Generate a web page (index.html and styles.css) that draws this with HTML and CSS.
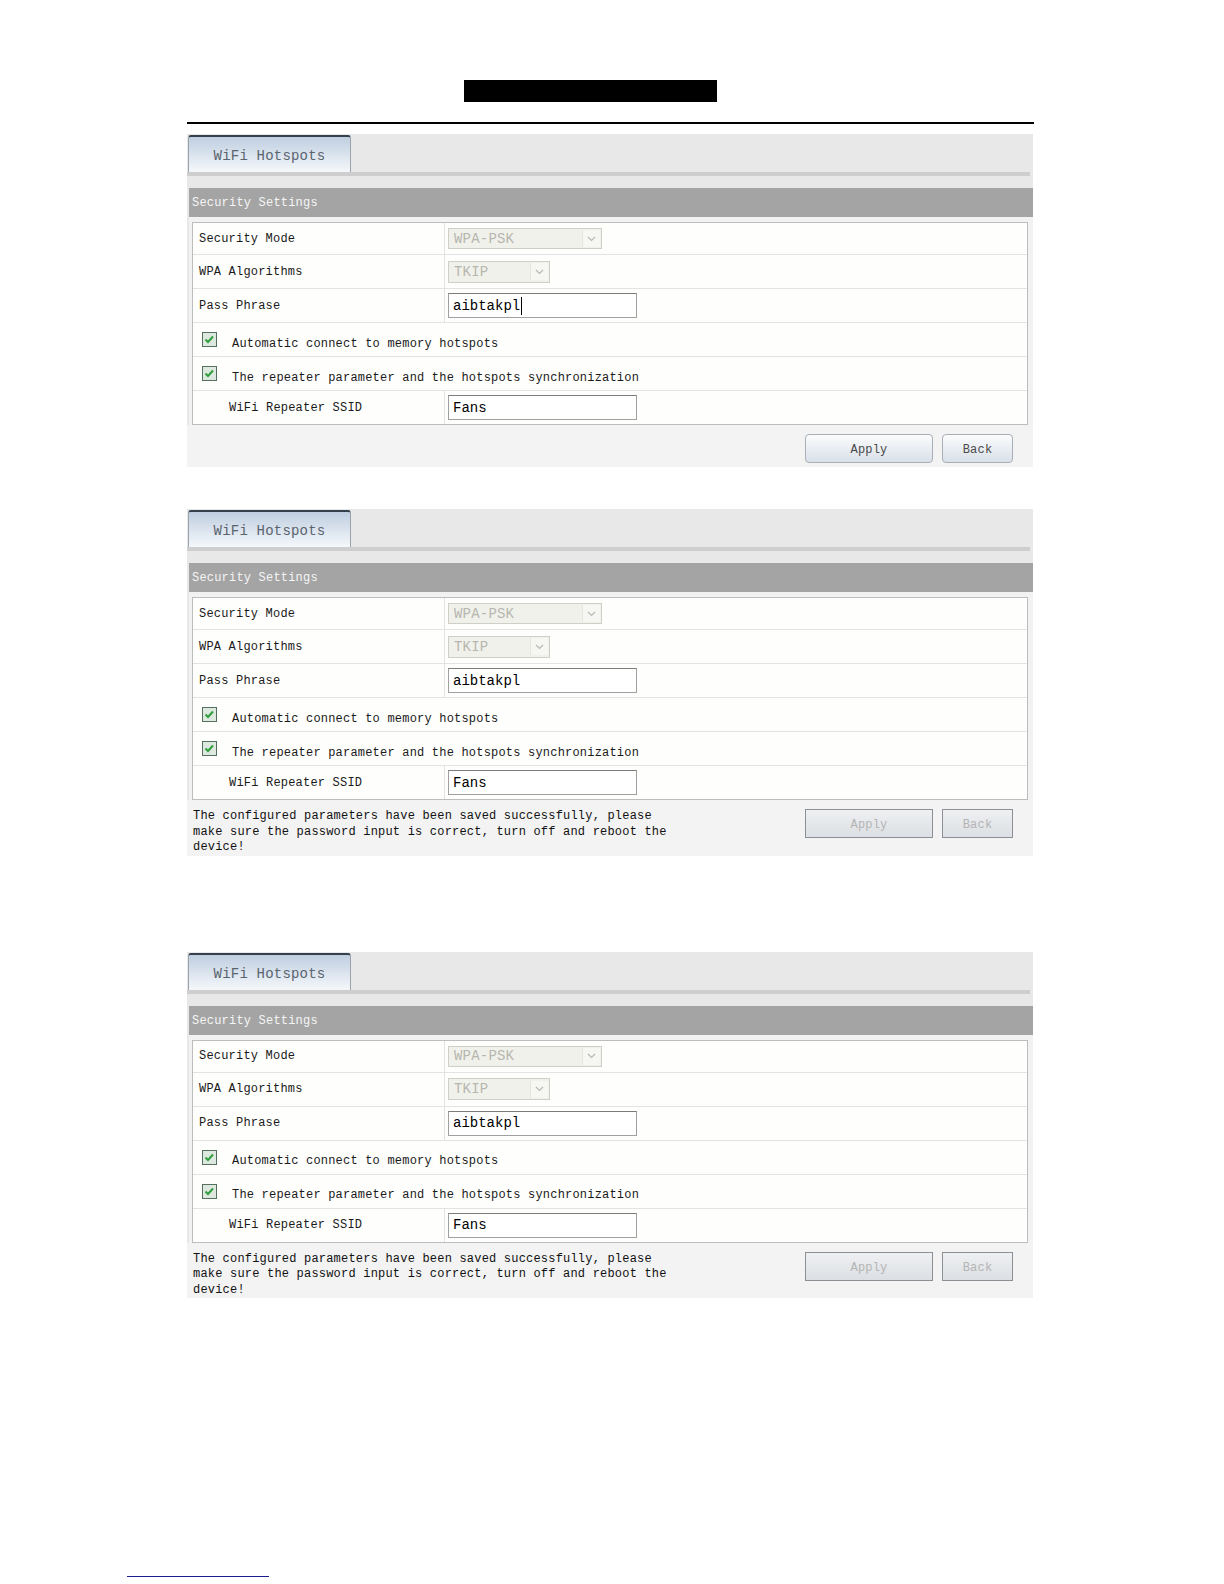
FILE: index.html
```html
<!DOCTYPE html>
<html lang="en">
<head>
    <title>WiFi Hotspots</title>
    <link rel="stylesheet" href="styles.css">
</head>
<body>
    <div class="page">
        <div class="title-block"></div>
        <div class="rule"></div>

        <!-- step 1: editing -->
        <div class="panel">
            <div class="tabs"><div class="tab">WiFi Hotspots</div></div>
            <div class="tab-line"></div>
            <div class="section-title">Security Settings</div>
            <div class="form-wrap">
                <div class="form">
                    <div class="row">
                        <div class="label">Security Mode</div>
                        <div class="value">
                            <div class="select wide"><span>WPA-PSK</span><span class="arrow"><svg width="9" height="6" viewBox="0 0 9 6"><path d="M1 1l3.5 3.5L8 1" fill="none" stroke="#b5bab5" stroke-width="1.2"/></svg></span></div>
                        </div>
                    </div>
                    <div class="row">
                        <div class="label">WPA Algorithms</div>
                        <div class="value">
                            <div class="select narrow"><span>TKIP</span><span class="arrow"><svg width="9" height="6" viewBox="0 0 9 6"><path d="M1 1l3.5 3.5L8 1" fill="none" stroke="#b5bab5" stroke-width="1.2"/></svg></span></div>
                        </div>
                    </div>
                    <div class="row">
                        <div class="label">Pass Phrase</div>
                        <div class="value"><div class="input">aibtakpl<span class="caret"></span></div></div>
                    </div>
                    <div class="row check-row">
                        <svg class="check" width="15" height="15" viewBox="0 0 15 15"><rect x="0.5" y="0.5" width="14" height="14" fill="#dde8df" stroke="#56705f"/><path d="M3.5 7.5l2.5 2.5 5-5.5" fill="none" stroke="#2f9e3c" stroke-width="2"/></svg>
                        <span>Automatic connect to memory hotspots</span>
                    </div>
                    <div class="row check-row">
                        <svg class="check" width="15" height="15" viewBox="0 0 15 15"><rect x="0.5" y="0.5" width="14" height="14" fill="#dde8df" stroke="#56705f"/><path d="M3.5 7.5l2.5 2.5 5-5.5" fill="none" stroke="#2f9e3c" stroke-width="2"/></svg>
                        <span>The repeater parameter and the hotspots synchronization</span>
                    </div>
                    <div class="row">
                        <div class="label indent">WiFi Repeater SSID</div>
                        <div class="value"><div class="input">Fans</div></div>
                    </div>
                </div>
            </div>
            <div class="actions">
                <p class="msg"></p>
                <div class="buttons">
                    <button class="btn apply">Apply</button>
                    <button class="btn back">Back</button>
                </div>
            </div>
        </div>

        <!-- step 2: saved -->
        <div class="panel">
            <div class="tabs"><div class="tab">WiFi Hotspots</div></div>
            <div class="tab-line"></div>
            <div class="section-title">Security Settings</div>
            <div class="form-wrap">
                <div class="form">
                    <div class="row">
                        <div class="label">Security Mode</div>
                        <div class="value">
                            <div class="select wide"><span>WPA-PSK</span><span class="arrow"><svg width="9" height="6" viewBox="0 0 9 6"><path d="M1 1l3.5 3.5L8 1" fill="none" stroke="#b5bab5" stroke-width="1.2"/></svg></span></div>
                        </div>
                    </div>
                    <div class="row">
                        <div class="label">WPA Algorithms</div>
                        <div class="value">
                            <div class="select narrow"><span>TKIP</span><span class="arrow"><svg width="9" height="6" viewBox="0 0 9 6"><path d="M1 1l3.5 3.5L8 1" fill="none" stroke="#b5bab5" stroke-width="1.2"/></svg></span></div>
                        </div>
                    </div>
                    <div class="row">
                        <div class="label">Pass Phrase</div>
                        <div class="value"><div class="input">aibtakpl</div></div>
                    </div>
                    <div class="row check-row">
                        <svg class="check" width="15" height="15" viewBox="0 0 15 15"><rect x="0.5" y="0.5" width="14" height="14" fill="#dde8df" stroke="#56705f"/><path d="M3.5 7.5l2.5 2.5 5-5.5" fill="none" stroke="#2f9e3c" stroke-width="2"/></svg>
                        <span>Automatic connect to memory hotspots</span>
                    </div>
                    <div class="row check-row">
                        <svg class="check" width="15" height="15" viewBox="0 0 15 15"><rect x="0.5" y="0.5" width="14" height="14" fill="#dde8df" stroke="#56705f"/><path d="M3.5 7.5l2.5 2.5 5-5.5" fill="none" stroke="#2f9e3c" stroke-width="2"/></svg>
                        <span>The repeater parameter and the hotspots synchronization</span>
                    </div>
                    <div class="row">
                        <div class="label indent">WiFi Repeater SSID</div>
                        <div class="value"><div class="input">Fans</div></div>
                    </div>
                </div>
            </div>
            <div class="actions">
                <p class="msg">The configured parameters have been saved successfully, please<br>make sure the password input is correct, turn off and reboot the<br>device!</p>
                <div class="buttons">
                    <button class="btn apply off">Apply</button>
                    <button class="btn back off">Back</button>
                </div>
            </div>
        </div>

        <!-- step 3: same state -->
        <div class="panel later">
            <div class="tabs"><div class="tab">WiFi Hotspots</div></div>
            <div class="tab-line"></div>
            <div class="section-title">Security Settings</div>
            <div class="form-wrap">
                <div class="form">
                    <div class="row">
                        <div class="label">Security Mode</div>
                        <div class="value">
                            <div class="select wide"><span>WPA-PSK</span><span class="arrow"><svg width="9" height="6" viewBox="0 0 9 6"><path d="M1 1l3.5 3.5L8 1" fill="none" stroke="#b5bab5" stroke-width="1.2"/></svg></span></div>
                        </div>
                    </div>
                    <div class="row">
                        <div class="label">WPA Algorithms</div>
                        <div class="value">
                            <div class="select narrow"><span>TKIP</span><span class="arrow"><svg width="9" height="6" viewBox="0 0 9 6"><path d="M1 1l3.5 3.5L8 1" fill="none" stroke="#b5bab5" stroke-width="1.2"/></svg></span></div>
                        </div>
                    </div>
                    <div class="row">
                        <div class="label">Pass Phrase</div>
                        <div class="value"><div class="input">aibtakpl</div></div>
                    </div>
                    <div class="row check-row">
                        <svg class="check" width="15" height="15" viewBox="0 0 15 15"><rect x="0.5" y="0.5" width="14" height="14" fill="#dde8df" stroke="#56705f"/><path d="M3.5 7.5l2.5 2.5 5-5.5" fill="none" stroke="#2f9e3c" stroke-width="2"/></svg>
                        <span>Automatic connect to memory hotspots</span>
                    </div>
                    <div class="row check-row">
                        <svg class="check" width="15" height="15" viewBox="0 0 15 15"><rect x="0.5" y="0.5" width="14" height="14" fill="#dde8df" stroke="#56705f"/><path d="M3.5 7.5l2.5 2.5 5-5.5" fill="none" stroke="#2f9e3c" stroke-width="2"/></svg>
                        <span>The repeater parameter and the hotspots synchronization</span>
                    </div>
                    <div class="row">
                        <div class="label indent">WiFi Repeater SSID</div>
                        <div class="value"><div class="input">Fans</div></div>
                    </div>
                </div>
            </div>
            <div class="actions">
                <p class="msg">The configured parameters have been saved successfully, please<br>make sure the password input is correct, turn off and reboot the<br>device!</p>
                <div class="buttons">
                    <button class="btn apply off">Apply</button>
                    <button class="btn back off">Back</button>
                </div>
            </div>
        </div>
    </div>
    <div class="footnote-rule"></div>
</body>
</html>
```

FILE: styles.css
```css
body {
    margin: 0;
    font-family: "Liberation Mono", "DejaVu Sans Mono", monospace;
    font-size: 12px;
    letter-spacing: 0.2px;
    color: #1a1a1a;
    background: #fff;
}
.page {
    width: 847px;
    margin-left: 187px;
    padding-top: 80px;
}
.title-block {
    width: 253px;
    height: 22px;
    margin-left: 277px;
    background: #000;
}
.rule {
    height: 2px;
    margin: 20px 0 10px;
    background: #000;
}
.panel {
    width: 846px;
    background: #e8e8e8;
}
.panel + .panel {
    margin-top: 42px;
}
.panel.later {
    margin-top: 96px;
}
.tabs {
    height: 38px;
    padding: 1px 0 0 1px;
    box-sizing: border-box;
}
.tab {
    width: 163px;
    height: 37px;
    box-sizing: border-box;
    border: 1px solid #9aa3ab;
    border-top: 2px solid #34404c;
    border-bottom: none;
    border-radius: 3px 3px 0 0;
    background: linear-gradient(#bfcee0, #f5f8fb);
    color: #59646e;
    font-size: 14px;
    text-align: center;
    padding-top: 3px;
    line-height: 32px;
}
.tab-line {
    height: 4px;
    margin-right: 3px;
    background: #cecece;
}
.section-title {
    margin: 12px 0 0 2px;
    height: 29px;
    box-sizing: border-box;
    padding: 2px 0 0 3px;
    line-height: 27px;
    background: #a4a4a4;
    color: #f5f5f5;
}
.form-wrap {
    margin-left: 2px;
    padding: 5px 5px 0 3px;
    background: #f2f2f2;
}
.form {
    border: 1px solid #bdbdbd;
    background: #fefefd;
}
.row {
    display: flex;
    align-items: stretch;
    height: 34px;
    box-sizing: border-box;
    border-top: 1px solid #e3e3e3;
}
.row:first-child {
    height: 31px;
    border-top: none;
}
.label {
    display: flex;
    align-items: center;
    width: 252px;
    padding-left: 6px;
    box-sizing: border-box;
    border-right: 1px solid #e3e3e3;
}
.label.indent {
    padding-left: 36px;
}
.value {
    display: flex;
    align-items: center;
    padding-left: 3px;
}
.select {
    display: flex;
    align-items: center;
    height: 21px;
    box-sizing: border-box;
    border: 1px solid #cfcfc8;
    background: #f1f1ec;
    color: #b6b6ae;
    font-size: 14px;
    padding-left: 5px;
}
.select.wide {
    width: 154px;
}
.select.narrow {
    width: 102px;
    height: 22px;
}
.select .arrow {
    display: flex;
    align-items: center;
    justify-content: center;
    margin-left: auto;
    width: 17px;
    height: 17px;
    margin-right: 1px;
    background: #f6f6f2;
    border-left: 1px solid #e6e6e0;
}
.input {
    display: flex;
    align-items: center;
    width: 189px;
    height: 25px;
    box-sizing: border-box;
    border: 1px solid #a0a0a0;
    border-top-color: #7c7c7c;
    background: #fff;
    padding-left: 4px;
    font-size: 14px;
    color: #000;
    letter-spacing: 0;
}
.caret {
    display: inline-block;
    width: 1px;
    height: 18px;
    margin-left: 1px;
    background: #000;
}
.check-row {
    align-items: center;
    padding-left: 9px;
}
.check {
    flex-shrink: 0;
}
.check-row span {
    margin: 8px 0 0 15px;
}
.actions {
    display: flex;
    justify-content: space-between;
    align-items: flex-start;
    min-height: 42px;
    padding: 0 20px 0 6px;
    background: #f3f3f3;
}
.msg {
    margin: 9px 0 0;
    line-height: 15.5px;
    color: #111;
}
.buttons {
    display: flex;
    gap: 9px;
    margin-top: 9px;
}
.btn {
    height: 29px;
    border: 1px solid #a8afb7;
    border-radius: 4px;
    background: linear-gradient(#fbfcfd, #d9e0e8);
    color: #4a4a4a;
    font-family: inherit;
    font-size: 12px;
    letter-spacing: 0.2px;
    padding: 3px 0 0;
}
.btn.apply {
    width: 128px;
}
.btn.back {
    width: 71px;
}
.btn.off {
    border-radius: 0;
    border-color: #8c8f93;
    background: linear-gradient(#eef0f2, #dcdfe3);
    color: #b4b4b4;
}
.footnote-rule {
    width: 142px;
    height: 1px;
    margin: 278px 0 0 127px;
    background: #1c1c8c;
}
```
